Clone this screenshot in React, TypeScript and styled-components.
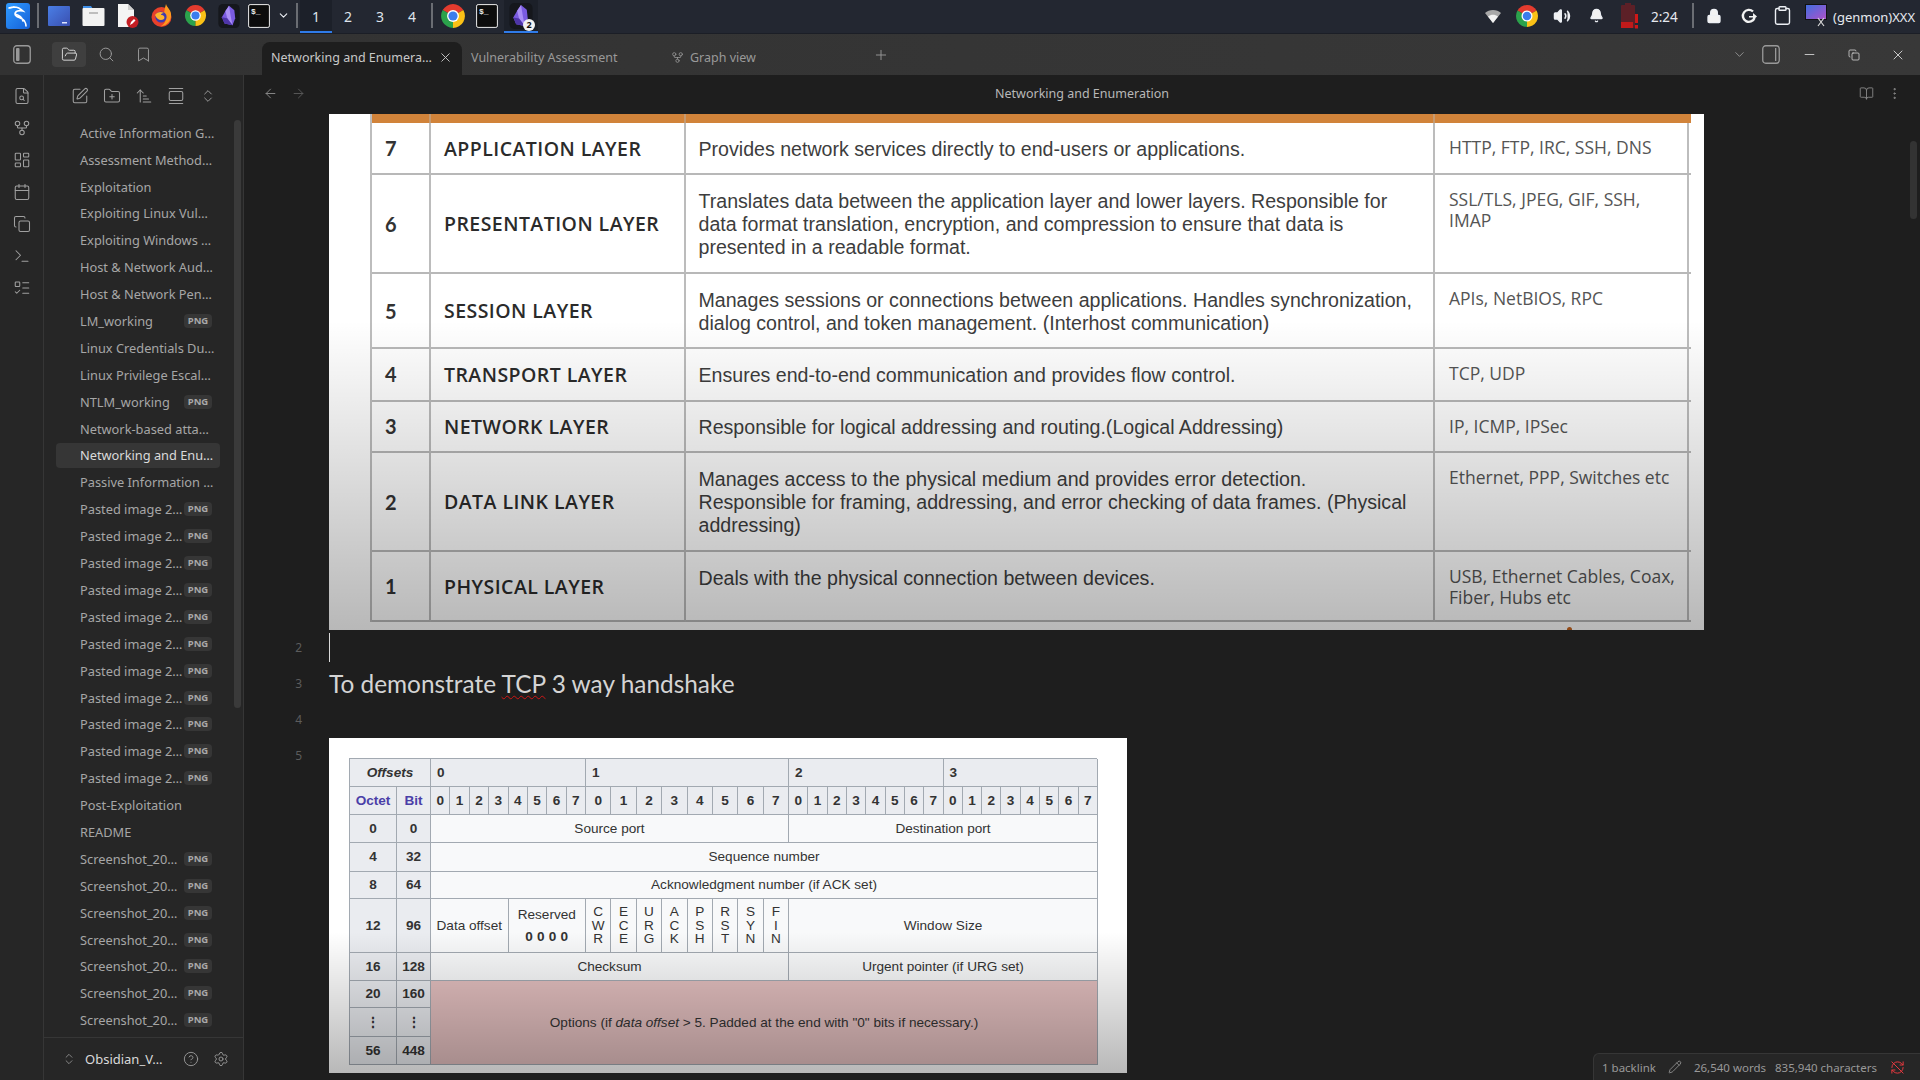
import React, { FC, ReactNode } from "react";
import styled, { createGlobalStyle } from "styled-components";
import {
  ArrowLeft,
  ArrowRight,
  ArrowUpNarrowWide,
  Bell,
  Bookmark,
  BookOpen,
  Calendar,
  ChevronDown,
  ChevronsUpDown,
  CircleHelp,
  Clipboard,
  Copy,
  EllipsisVertical,
  FileSearch,
  FolderOpen,
  FolderPlus,
  GalleryVertical,
  GitFork,
  LayoutDashboard,
  ListTodo,
  Lock,
  Minus,
  Pencil,
  Plus,
  RefreshCw,
  Search,
  Settings,
  SquarePen,
  Terminal,
  Volume2,
  X,
} from "lucide-react";

const GlobalStyle = createGlobalStyle`
  html, body {
    margin: 0;
    padding: 0;
    background: #1e1e1e;
    overflow: hidden;
  }
  * { box-sizing: border-box; }
`;

/* ---------- desktop panel ---------- */

const Page = styled.div`
  position: relative;
  display: flex;
  flex-direction: column;
  width: 1920px;
  height: 1080px;
  overflow: hidden;
  font-family: "Noto Sans", sans-serif;
`;

const Panel = styled.div`
  display: flex;
  align-items: stretch;
  justify-content: space-between;
  height: 34px;
  flex: none;
  background: #232731;
  border-bottom: 1px solid #1b1e26;
  color: #eceff4;
`;

const PanelGroup = styled.div`
  display: flex;
  align-items: stretch;
`;

const Slot = styled.div<{ $w: number; $active?: boolean; $line?: boolean }>`
  display: flex;
  align-items: center;
  justify-content: center;
  width: ${(p) => p.$w}px;
  flex: none;
  position: relative;
  background: ${(p) => (p.$active ? "#1c2029" : "transparent")};
  border-bottom: 2px solid ${(p) => (p.$line ? "#2f7be8" : "transparent")};
`;

const Workspace = styled(Slot)`
  font-size: 14px;
  padding-top: 1px;
  color: #dfe4ec;
`;

const PanelSep = styled.div`
  width: 2px;
  height: 25px;
  background: #6a6d73;
`;

const Clock = styled.div`
  width: 40px;
  display: flex;
  align-items: center;
  font-size: 13.5px;
  color: #e6e9ef;
`;

const GenmonText = styled.div`
  display: flex;
  align-items: center;
  width: 87px;
  font-size: 13px;
  white-space: nowrap;
  color: #e6e9ef;
`;

const Badge2 = styled.span`
  position: absolute;
  right: 3px;
  bottom: 0;
  width: 12px;
  height: 12px;
  border-radius: 50%;
  background: #f2f2f2;
  color: #111;
  font-size: 9px;
  font-weight: 700;
  line-height: 12px;
  text-align: center;
`;

/* ---------- obsidian title bar ---------- */

const TitleBar = styled.div`
  display: flex;
  align-items: flex-end;
  height: 41px;
  flex: none;
  background: linear-gradient(90deg, #323232, #383838);
  color: #999;
`;

const TitleTools = styled.div`
  display: flex;
  align-items: center;
  width: 262px;
  height: 41px;
  flex: none;
`;

const ToolSlot = styled.div<{ $w: number; $active?: boolean; $ml?: number; $bright?: boolean }>`
  display: flex;
  align-items: center;
  justify-content: center;
  width: ${(p) => p.$w}px;
  height: ${(p) => (p.$active ? "25px" : "100%")};
  margin-left: ${(p) => p.$ml || 0}px;
  flex: none;
  border-radius: 4px;
  background: ${(p) => (p.$active ? "#3f3f3f" : "transparent")};
  color: ${(p) => (p.$active || p.$bright ? "#d4d4d4" : "#999")};
`;

const Tab = styled.div<{ $active?: boolean }>`
  display: flex;
  align-items: center;
  gap: 6px;
  width: 200px;
  height: 33px;
  padding: 0 9px 2px;
  flex: none;
  border-radius: 8px 8px 0 0;
  font-size: 12.5px;
  background: ${(p) => (p.$active ? "#1e1e1e" : "transparent")};
  color: ${(p) => (p.$active ? "#c8c8c8" : "#999")};
`;

const TabLabel = styled.span`
  flex: 1;
  white-space: nowrap;
`;

const TitleRight = styled.div`
  display: flex;
  margin-left: auto;
  height: 41px;
`;

/* ---------- body ---------- */

const Body = styled.div`
  display: flex;
  flex: 1;
  min-height: 0;
`;

const Ribbon = styled.div`
  display: flex;
  flex-direction: column;
  width: 44px;
  flex: none;
  padding-top: 5px;
  background: #262626;
  border-right: 1px solid #363636;
  color: #a0a0a0;
`;

const RibbonSlot = styled.div`
  display: flex;
  align-items: center;
  justify-content: center;
  height: 32px;
`;

const Sidebar = styled.div`
  position: relative;
  display: flex;
  flex-direction: column;
  width: 200px;
  flex: none;
  background: #262626;
  border-right: 1px solid #363636;
`;

const SideHead = styled.div`
  display: flex;
  align-items: center;
  height: 42px;
  padding-left: 20px;
  flex: none;
  color: #a0a0a0;
`;

const SideHeadSlot = styled.div`
  display: flex;
  align-items: center;
  justify-content: center;
  width: 32px;
`;

const FileList = styled.div`
  flex: 1;
  min-height: 0;
  padding: 3.3px 0 0 12px;
  overflow: hidden;
`;

const FileRow = styled.div<{ $active?: boolean }>`
  display: flex;
  align-items: center;
  width: 164px;
  height: 25px;
  margin-bottom: 1.9px;
  padding: 0 8px 0 24px;
  border-radius: 4px;
  font-size: 12.8px;
  white-space: nowrap;
  background: ${(p) => (p.$active ? "#363636" : "transparent")};
  color: ${(p) => (p.$active ? "#dadada" : "#a6a6a6")};
`;

const FileName = styled.span`
  flex: 1;
`;

const PngTag = styled.span`
  width: 28px;
  height: 14px;
  flex: none;
  border-radius: 4px;
  background: #363636;
  color: #a8a8a8;
  font-size: 9.5px;
  font-weight: 700;
  line-height: 14px;
  text-align: center;
`;

const SideScroll = styled.div`
  position: absolute;
  left: 190px;
  top: 45px;
  width: 7px;
  height: 588px;
  border-radius: 4px;
  background: #3a3a3a;
`;

const SideFoot = styled.div`
  display: flex;
  align-items: center;
  gap: 14px;
  height: 43px;
  padding: 0 14px 0 18px;
  flex: none;
  border-top: 1px solid #363636;
  color: #999;
`;

const VaultName = styled.span`
  flex: 1;
  margin-left: -5px;
  font-size: 13px;
  color: #dadada;
`;

/* ---------- editor ---------- */

const Main = styled.div`
  position: relative;
  display: flex;
  flex-direction: column;
  flex: 1;
  min-width: 0;
  background: #1e1e1e;
`;

const EditorHead = styled.div`
  display: flex;
  align-items: center;
  height: 39px;
  padding-bottom: 2px;
  flex: none;
  color: #999;
`;

const HeadSide = styled.div`
  display: flex;
  width: 80px;
  flex: none;
  padding: 0 12px;
`;

const HeadSlot = styled.div<{ $dim?: boolean }>`
  display: flex;
  justify-content: center;
  width: 28px;
  color: ${(p) => (p.$dim ? "#5a5a5a" : "#8c8c8c")};
`;

const NoteTitle = styled.div`
  flex: 1;
  font-size: 12.5px;
  text-align: center;
  color: #b8b8b8;
`;

const Line = styled.div`
  display: grid;
  grid-template-columns: 85px 1fr;
  align-items: start;
  min-height: 36px;
`;

const LineNo = styled.div`
  padding-right: 27px;
  font-size: 12px;
  line-height: 36px;
  text-align: right;
  color: #5c5c5c;
`;

const Caret = styled.div`
  width: 1px;
  height: 29px;
  margin-top: 3px;
  background: #dadada;
`;

const Prose = styled.div`
  font-family: "Lato", sans-serif;
  font-size: 24.4px;
  line-height: 36px;
  color: #d4d4d4;
`;

const Misspelt = styled.span`
  text-decoration: underline wavy #d01515 1px;
  text-underline-offset: 2px;
`;

const Shot = styled.div<{ $w: number; $h: number; $pad: string; $fade: number }>`
  position: relative;
  width: ${(p) => p.$w}px;
  height: ${(p) => p.$h}px;
  padding: ${(p) => p.$pad};
  background: #fff;
  overflow: hidden;

  &::after {
    content: "";
    position: absolute;
    inset: 0;
    background: linear-gradient(
      180deg,
      transparent ${(p) => p.$fade}%,
      rgba(0, 0, 0, 0.28) 100%
    );
    pointer-events: none;
  }
`;

const OrangeDot = styled.span`
  position: absolute;
  left: 1238px;
  bottom: 0;
  width: 5px;
  height: 3px;
  border-radius: 3px 3px 0 0;
  background: #c9661f;
`;

/* OSI table */
const OsiGrid = styled.div`
  display: grid;
  grid-template-columns: 59px 254.5px 749.5px 256px;
  grid-template-rows: 9px 52px 99px 75px 52.5px 51.5px 99px 70px;
  border-left: 2px solid #bdbdbd;
  border-right: 2px solid #bdbdbd;
`;

const OsiHead = styled.div`
  background: #d1833a;
  border-right: 2px solid #c69a70;

  &:nth-child(4) { border-right: 0; }
`;

const OsiCell = styled.div<{ $last?: boolean }>`
  border-right: ${(p) => (p.$last ? "0" : "2px solid #bcbcbc")};
  border-bottom: 2px solid #b8b8b8;
`;

const OsiNum = styled(OsiCell)`
  display: flex;
  align-items: center;
  padding-left: 13px;
  font-family: "Lato", sans-serif;
  font-size: 20px;
  font-weight: 700;
  color: #333;
`;

const OsiName = styled(OsiCell)`
  display: flex;
  align-items: center;
  padding-left: 13px;
  font-family: "Open Sans", sans-serif;
  font-size: 19.5px;
  font-weight: 600;
  letter-spacing: 0.45px;
  white-space: nowrap;
  color: #2b2b2b;
`;

const OsiDesc = styled(OsiCell)`
  padding: 14.5px 12px 0 13px;
  font-family: "Liberation Sans", sans-serif;
  font-size: 19.6px;
  line-height: 23.4px;
  white-space: pre-line;
  color: #3d3d3d;
`;

const OsiProto = styled(OsiCell)`
  padding: 14px 6px 0 14px;
  font-family: "Open Sans", sans-serif;
  font-size: 17.5px;
  line-height: 21px;
  white-space: pre-line;
  color: #555;
`;

/* TCP header table */
const TcpGrid = styled.div`
  display: grid;
  grid-template-columns: 47px 34px repeat(8, 19.375px) repeat(8, 25.375px) repeat(16, 19.3125px);
  grid-template-rows: 28px 28.5px 28px 28.5px 27px 54px 28px 27.5px 28.5px 28px;
  border-top: 1px solid #a2a9b1;
  border-left: 1px solid #a2a9b1;
  font-family: "Liberation Sans", sans-serif;
  font-size: 13.6px;
  color: #333;
`;

const TcpCell = styled.div<{
  $span?: number;
  $rows?: number;
  $head?: boolean;
  $bold?: boolean;
  $left?: boolean;
  $blue?: boolean;
  $red?: boolean;
}>`
  display: flex;
  flex-direction: column;
  align-items: ${(p) => (p.$left ? "flex-start" : "center")};
  justify-content: center;
  grid-column: span ${(p) => p.$span || 1};
  grid-row: span ${(p) => p.$rows || 1};
  padding-left: ${(p) => (p.$left ? "6px" : "0")};
  border-right: 1px solid #a2a9b1;
  border-bottom: 1px solid #a2a9b1;
  background: ${(p) => (p.$red ? "#e3bfbf" : p.$head ? "#eaecf0" : "#f8f9fa")};
  font-weight: ${(p) => (p.$bold || p.$head ? 700 : 400)};
  color: ${(p) => (p.$blue ? "#4a3fa8" : "#333")};
  white-space: nowrap;
`;

const Flag = styled.span`
  line-height: 13.3px;
  text-align: center;
  white-space: pre-line;
`;

const ReservedBits = styled.b`
  margin-top: 7px;
  letter-spacing: 4.2px;
  margin-right: -4px;
`;

/* overlays */
const StatusBar = styled.div`
  position: absolute;
  right: 0;
  bottom: 0;
  display: flex;
  align-items: center;
  width: 327px;
  height: 27px;
  padding-left: 8px;
  border: 1px solid #363636;
  border-width: 1px 0 0 1px;
  border-radius: 6px 0 0 0;
  background: #262626;
  font-size: 11.5px;
  color: #999;
  white-space: nowrap;
`;

const StatusGap = styled.span<{ $w: number }>`
  display: inline-flex;
  margin-left: ${(p) => p.$w}px;
`;

const MainScroll = styled.div`
  position: absolute;
  right: 3px;
  top: 66px;
  width: 7px;
  height: 78px;
  border-radius: 4px;
  background: #333;
`;

/* ---------- drawn icons ---------- */

const KaliLogo: FC = () => (
  <svg width="24" height="26" viewBox="0 0 24 26">
    <defs>
      <linearGradient id="kali" x1="0" y1="0" x2="1" y2="1">
        <stop offset="0" stopColor="#2f9bff" />
        <stop offset="1" stopColor="#1560d8" />
      </linearGradient>
    </defs>
    <rect width="24" height="26" rx="3" fill="url(#kali)" />
    <path
      d="M3 5c5-2 10-1 14 3-4-1-8 0-8 3 0 4 8 3 10 8 1 2 1 3 1 4M9 11c4 1 7 3 8 7M4 5l4-1"
      fill="none"
      stroke="#fff"
      strokeWidth="1.6"
      strokeLinecap="round"
    />
  </svg>
);

const ChromeIcon: FC<{ size: number }> = ({ size }) => (
  <svg width={size} height={size} viewBox="0 0 48 48">
    <path d="M24 24 4.95 13A22 22 0 0 1 43.05 13Z" fill="#e33b2e" />
    <path d="M24 24 4.95 13A22 22 0 0 0 24 46Z" fill="#2ba24c" />
    <path d="M24 24 24 46A22 22 0 0 0 43.05 13Z" fill="#fbc116" />
    <circle cx="24" cy="24" r="11" fill="#fff" />
    <circle cx="24" cy="24" r="8.5" fill="#3b7ded" />
  </svg>
);

const FirefoxIcon: FC = () => (
  <svg width="21" height="25" viewBox="0 0 21 25">
    <circle cx="10.5" cy="14" r="10" fill="#e8412b" />
    <path d="M15 1c1 4 6 6 5 13-1 6-6 9-10 9 5-3 6-8 3-11 0-4 1-7 2-11Z" fill="#ff9a1f" />
    <circle cx="10" cy="14" r="5.6" fill="#3f3bb0" />
    <path d="M4 12c2-3 6-4 9-2-2 0-3 1-3 2 3 0 4 2 3 4-3 2-7 1-9-4Z" fill="#ffb52e" />
  </svg>
);

const ObsidianIcon: FC<{ h: number }> = ({ h }) => (
  <svg width={h} height={h} viewBox="-3 -2 24 27">
    <rect x="-3" y="-2" width="24" height="27" rx="5" fill="#15171c" />
    <polygon points="9,0 15,5 16,14 13,22 4,20 1,13 5,6" fill="#7a5be0" />
    <polygon points="9,0 5,6 7,14 13,22 11,12" fill="#a98ef5" />
    <polygon points="1,13 7,14 13,22 4,20" fill="#4e35a8" />
  </svg>
);

const TermIcon: FC = () => (
  <svg width="22" height="24" viewBox="0 0 22 24">
    <rect x="0.6" y="0.6" width="20.8" height="22.8" rx="1.5" fill="#0c0c0c" stroke="#ededed" />
    <text x="3" y="10" fill="#eee" fontSize="8" fontFamily="Liberation Mono, monospace" fontWeight="700">
      $_
    </text>
  </svg>
);

const DesktopIcon: FC = () => (
  <svg width="22" height="20" viewBox="0 0 22 20">
    <defs>
      <linearGradient id="desk" x1="0" y1="0" x2="1" y2="1">
        <stop offset="0" stopColor="#4a7fe6" />
        <stop offset="1" stopColor="#3a4fb0" />
      </linearGradient>
    </defs>
    <rect width="22" height="20" rx="1" fill="url(#desk)" />
    <rect x="14" y="16" width="5" height="1.5" fill="#dfe6ff" />
  </svg>
);

const FilesIcon: FC = () => (
  <svg width="23" height="23" viewBox="0 0 23 23">
    <path d="M1 5V2h8l2 3Z" fill="#3f8fe8" />
    <rect x="0.5" y="4" width="22" height="18" rx="1" fill="#f2f2f2" />
    <rect x="7" y="8" width="9" height="2" fill="#bdbdbd" />
  </svg>
);

const DocIcon: FC = () => (
  <svg width="22" height="26" viewBox="0 0 22 26">
    <path d="M1 1h10l6 6v17H1Z" fill="#f4f4f4" />
    <path d="M11 1v6h6Z" fill="#cfcfcf" />
    <circle cx="15.5" cy="19" r="6" fill="#c41e24" />
    <path d="m13 22 1-3 3-3 1.5 1.5-3 3Z" fill="#fff" />
  </svg>
);

const WifiIcon: FC = () => (
  <svg width="16" height="16" viewBox="0 0 16 16">
    <path d="M0 5C4 1 12 1 16 5L8 15Z" fill="#a8a8a8" />
    <path d="M3 8.5C6 6 10 6 13 8.5L8 15Z" fill="#f2f2f2" />
  </svg>
);

const BatteryIcon: FC = () => (
  <svg width="18" height="26" viewBox="0 0 18 26">
    <rect x="4" y="0" width="6" height="3" fill="#5c2027" />
    <rect x="0" y="2" width="14" height="23" rx="1" fill="#5c2027" />
    <rect x="0" y="19" width="12" height="6" fill="#c01a1a" />
    <rect x="14" y="11" width="3" height="9" fill="#d01818" />
    <rect x="14" y="22" width="3" height="3.5" fill="#d01818" />
  </svg>
);

const GArrowIcon: FC = () => (
  <svg width="16" height="16" viewBox="0 0 16 16">
    <path d="M12 3.5A6 6 0 1 0 13.5 10" fill="none" stroke="#f2f2f2" strokeWidth="2.4" />
    <path d="M8 8h4V5l4 3.5-4 3.5V9.5H8Z" fill="#f2f2f2" />
  </svg>
);

const ScreenIcon: FC = () => (
  <svg width="22" height="23" viewBox="0 0 22 23">
    <defs>
      <linearGradient id="scr" x1="0" y1="0" x2="1" y2="1">
        <stop offset="0" stopColor="#3f6fe0" />
        <stop offset="1" stopColor="#b050c8" />
      </linearGradient>
    </defs>
    <rect x="0.5" y="0.5" width="21" height="15" fill="url(#scr)" stroke="#111" />
    <path d="m13 14 6 8M19 14l-6 8" stroke="#d8d8d8" strokeWidth="1.2" />
  </svg>
);

const PanelToggle: FC<{ side: "left" | "right" }> = ({ side }) => (
  <svg width="18" height="19" viewBox="0 0 18 19" fill="none">
    <rect x="0.75" y="0.75" width="16.5" height="17.5" rx="3" stroke="currentColor" strokeWidth="1.3" />
    {side === "left" ? (
      <rect x="3" y="3" width="3.5" height="13" rx="1" fill="currentColor" />
    ) : (
      <rect x="13" y="3" width="1.3" height="13" fill="currentColor" />
    )}
  </svg>
);

const Chevrons: FC = () => <ChevronsUpDown size={16} strokeWidth={1.4} />;

/* ---------- data ---------- */

interface SideFile {
  name: string;
  png?: boolean;
  active?: boolean;
}

const repeat = (name: string, count: number): SideFile[] =>
  Array.from({ length: count }, () => ({ name, png: true }));

const files: SideFile[] = [
  { name: "Active Information G…" },
  { name: "Assessment Method…" },
  { name: "Exploitation" },
  { name: "Exploiting Linux Vul…" },
  { name: "Exploiting Windows …" },
  { name: "Host & Network Aud…" },
  { name: "Host & Network Pen…" },
  { name: "LM_working", png: true },
  { name: "Linux Credentials Du…" },
  { name: "Linux Privilege Escal…" },
  { name: "NTLM_working", png: true },
  { name: "Network-based atta…" },
  { name: "Networking and Enu…", active: true },
  { name: "Passive Information …" },
  ...repeat("Pasted image 2…", 11),
  { name: "Post-Exploitation" },
  { name: "README" },
  ...repeat("Screenshot_20…", 7),
];

const ribbonIcons: ReactNode[] = [
  <FileSearch size={18} strokeWidth={1.4} />,
  <GitFork size={18} strokeWidth={1.4} />,
  <LayoutDashboard size={18} strokeWidth={1.4} />,
  <Calendar size={18} strokeWidth={1.4} />,
  <Copy size={18} strokeWidth={1.4} />,
  <Terminal size={18} strokeWidth={1.4} />,
  <ListTodo size={18} strokeWidth={1.4} />,
];

const layers = [
  {
    n: "7",
    name: "APPLICATION LAYER",
    desc: "Provides network services directly to end-users or applications.",
    proto: "HTTP, FTP, IRC, SSH, DNS",
  },
  {
    n: "6",
    name: "PRESENTATION LAYER",
    desc: "Translates data between the application layer and lower layers. Responsible for\ndata format translation, encryption, and compression to ensure that data is\npresented in a readable format.",
    proto: "SSL/TLS, JPEG, GIF, SSH,\nIMAP",
  },
  {
    n: "5",
    name: "SESSION LAYER",
    desc: "Manages sessions or connections between applications. Handles synchronization,\ndialog control, and token management. (Interhost communication)",
    proto: "APIs, NetBIOS, RPC",
  },
  {
    n: "4",
    name: "TRANSPORT LAYER",
    desc: "Ensures end-to-end communication and provides flow control.",
    proto: "TCP, UDP",
  },
  {
    n: "3",
    name: "NETWORK LAYER",
    desc: "Responsible for logical addressing and routing.(Logical Addressing)",
    proto: "IP, ICMP, IPSec",
  },
  {
    n: "2",
    name: "DATA LINK LAYER",
    desc: "Manages access to the physical medium and provides error detection.\nResponsible for framing, addressing, and error checking of data frames. (Physical\naddressing)",
    proto: "Ethernet, PPP, Switches etc",
  },
  {
    n: "1",
    name: "PHYSICAL LAYER",
    desc: "Deals with the physical connection between devices.",
    proto: "USB, Ethernet Cables, Coax,\nFiber, Hubs etc",
  },
];

const bitLabels = Array.from({ length: 32 }, (_, i) => String(i % 8));
const flags = ["C\nW\nR", "E\nC\nE", "U\nR\nG", "A\nC\nK", "P\nS\nH", "R\nS\nT", "S\nY\nN", "F\nI\nN"];

const OsiTable: FC = () => (
  <OsiGrid>
    <OsiHead />
    <OsiHead />
    <OsiHead />
    <OsiHead />
    {layers.map((l) => (
      <React.Fragment key={l.n}>
        <OsiNum>{l.n}</OsiNum>
        <OsiName>{l.name}</OsiName>
        <OsiDesc>{l.desc}</OsiDesc>
        <OsiProto $last>{l.proto}</OsiProto>
      </React.Fragment>
    ))}
  </OsiGrid>
);

const TcpTable: FC = () => (
  <TcpGrid>
    <TcpCell $span={2} $head>
      <i>Offsets</i>
    </TcpCell>
    <TcpCell $span={8} $head $left>0</TcpCell>
    <TcpCell $span={8} $head $left>1</TcpCell>
    <TcpCell $span={8} $head $left>2</TcpCell>
    <TcpCell $span={8} $head $left>3</TcpCell>

    <TcpCell $head $blue>Octet</TcpCell>
    <TcpCell $head $blue>Bit</TcpCell>
    {bitLabels.map((b, i) => (
      <TcpCell key={i} $head>{b}</TcpCell>
    ))}

    <TcpCell $head>0</TcpCell>
    <TcpCell $head>0</TcpCell>
    <TcpCell $span={16}>Source port</TcpCell>
    <TcpCell $span={16}>Destination port</TcpCell>

    <TcpCell $head>4</TcpCell>
    <TcpCell $head>32</TcpCell>
    <TcpCell $span={32}>Sequence number</TcpCell>

    <TcpCell $head>8</TcpCell>
    <TcpCell $head>64</TcpCell>
    <TcpCell $span={32}>Acknowledgment number (if ACK set)</TcpCell>

    <TcpCell $head>12</TcpCell>
    <TcpCell $head>96</TcpCell>
    <TcpCell $span={4}>Data offset</TcpCell>
    <TcpCell $span={4}>
      Reserved
      <ReservedBits>0000</ReservedBits>
    </TcpCell>
    {flags.map((f) => (
      <TcpCell key={f}>
        <Flag>{f}</Flag>
      </TcpCell>
    ))}
    <TcpCell $span={16}>Window Size</TcpCell>

    <TcpCell $head>16</TcpCell>
    <TcpCell $head>128</TcpCell>
    <TcpCell $span={16}>Checksum</TcpCell>
    <TcpCell $span={16}>Urgent pointer (if URG set)</TcpCell>

    <TcpCell $head>20</TcpCell>
    <TcpCell $head>160</TcpCell>
    <TcpCell $span={32} $rows={3} $red>
      <span>
        Options (if <i>data offset</i> &gt; 5. Padded at the end with "0" bits if necessary.)
      </span>
    </TcpCell>
    <TcpCell $head>⋮</TcpCell>
    <TcpCell $head>⋮</TcpCell>
    <TcpCell $head>56</TcpCell>
    <TcpCell $head>448</TcpCell>
  </TcpGrid>
);

export default function App() {
  return (
    <Page>
      <GlobalStyle />

      <Panel>
        <PanelGroup>
          <Slot $w={35}><KaliLogo /></Slot>
          <Slot $w={6}><PanelSep /></Slot>
          <Slot $w={35}><DesktopIcon /></Slot>
          <Slot $w={34}><FilesIcon /></Slot>
          <Slot $w={35}><DocIcon /></Slot>
          <Slot $w={33}><FirefoxIcon /></Slot>
          <Slot $w={34}><ChromeIcon size={23} /></Slot>
          <Slot $w={33}><ObsidianIcon h={24} /></Slot>
          <Slot $w={28}><TermIcon /></Slot>
          <Slot $w={21}><ChevronDown size={13} strokeWidth={2} /></Slot>
          <Slot $w={6}><PanelSep /></Slot>
          <Workspace $w={32} $active $line>1</Workspace>
          <Workspace $w={32}>2</Workspace>
          <Workspace $w={32}>3</Workspace>
          <Workspace $w={32}>4</Workspace>
          <Slot $w={8}><PanelSep /></Slot>
          <Slot $w={34}><ChromeIcon size={26} /></Slot>
          <Slot $w={34}><TermIcon /></Slot>
          <Slot $w={34} $active $line>
            <ObsidianIcon h={26} />
            <Badge2>2</Badge2>
          </Slot>
        </PanelGroup>
        <PanelGroup>
          <Slot $w={34}><WifiIcon /></Slot>
          <Slot $w={34}><ChromeIcon size={24} /></Slot>
          <Slot $w={35}><Volume2 size={18} fill="#f2f2f2" strokeWidth={2} /></Slot>
          <Slot $w={34}><Bell size={15} fill="#f2f2f2" /></Slot>
          <Slot $w={34}><BatteryIcon /></Slot>
          <Slot $w={4} />
          <Clock>2:24</Clock>
          <Slot $w={4}><PanelSep /></Slot>
          <Slot $w={38}><Lock size={16} fill="#f2f2f2" strokeWidth={2} /></Slot>
          <Slot $w={32}><GArrowIcon /></Slot>
          <Slot $w={34}><Clipboard size={21} strokeWidth={1.6} /></Slot>
          <Slot $w={34}><ScreenIcon /></Slot>
          <GenmonText>(genmon)XXX</GenmonText>
        </PanelGroup>
      </Panel>

      <TitleBar>
        <TitleTools>
          <ToolSlot $w={44}><PanelToggle side="left" /></ToolSlot>
          <ToolSlot $w={34} $ml={8} $active><FolderOpen size={17} strokeWidth={1.4} /></ToolSlot>
          <ToolSlot $w={40}><Search size={17} strokeWidth={1.4} /></ToolSlot>
          <ToolSlot $w={34}><Bookmark size={17} strokeWidth={1.4} /></ToolSlot>
        </TitleTools>
        <Tab $active>
          <TabLabel>Networking and Enumera…</TabLabel>
          <X size={15} strokeWidth={1.5} />
        </Tab>
        <Tab>
          <TabLabel>Vulnerability Assessment</TabLabel>
        </Tab>
        <Tab>
          <GitFork size={13} strokeWidth={1.4} />
          <TabLabel>Graph view</TabLabel>
        </Tab>
        <ToolSlot $w={38}><Plus size={16} strokeWidth={1.4} /></ToolSlot>
        <TitleRight>
          <ToolSlot $w={32}><ChevronDown size={15} strokeWidth={1.4} /></ToolSlot>
          <ToolSlot $w={32}><PanelToggle side="right" /></ToolSlot>
          <ToolSlot $w={45} $bright><Minus size={15} strokeWidth={1.4} /></ToolSlot>
          <ToolSlot $w={44} $bright><Copy size={12} strokeWidth={1.6} /></ToolSlot>
          <ToolSlot $w={44} $bright><X size={16} strokeWidth={1.4} /></ToolSlot>
        </TitleRight>
      </TitleBar>

      <Body>
        <Ribbon>
          {ribbonIcons.map((icon, i) => (
            <RibbonSlot key={i}>{icon}</RibbonSlot>
          ))}
        </Ribbon>

        <Sidebar>
          <SideHead>
            <SideHeadSlot><SquarePen size={18} strokeWidth={1.4} /></SideHeadSlot>
            <SideHeadSlot><FolderPlus size={18} strokeWidth={1.4} /></SideHeadSlot>
            <SideHeadSlot><ArrowUpNarrowWide size={18} strokeWidth={1.4} /></SideHeadSlot>
            <SideHeadSlot><GalleryVertical size={18} strokeWidth={1.4} /></SideHeadSlot>
            <SideHeadSlot><Chevrons /></SideHeadSlot>
          </SideHead>
          <FileList>
            {files.map((f, i) => (
              <FileRow key={i} $active={f.active}>
                <FileName>{f.name}</FileName>
                {f.png && <PngTag>PNG</PngTag>}
              </FileRow>
            ))}
          </FileList>
          <SideScroll />
          <SideFoot>
            <ChevronsUpDown size={14} strokeWidth={1.4} />
            <VaultName>Obsidian_V…</VaultName>
            <CircleHelp size={16} strokeWidth={1.4} />
            <Settings size={16} strokeWidth={1.4} />
          </SideFoot>
        </Sidebar>

        <Main>
          <EditorHead>
            <HeadSide>
              <HeadSlot><ArrowLeft size={15} strokeWidth={1.5} /></HeadSlot>
              <HeadSlot $dim><ArrowRight size={15} strokeWidth={1.5} /></HeadSlot>
            </HeadSide>
            <NoteTitle>Networking and Enumeration</NoteTitle>
            <HeadSide>
              <HeadSlot><BookOpen size={15} strokeWidth={1.4} /></HeadSlot>
              <HeadSlot><EllipsisVertical size={15} strokeWidth={1.6} /></HeadSlot>
            </HeadSide>
          </EditorHead>

          <Line>
            <LineNo />
            <Shot $w={1375} $h={516} $pad="0 15px 8px 41px" $fade={40}>
              <OsiTable />
              <OrangeDot />
            </Shot>
          </Line>
          <Line>
            <LineNo>2</LineNo>
            <Caret />
          </Line>
          <Line>
            <LineNo>3</LineNo>
            <Prose>
              To demonstrate <Misspelt>TCP</Misspelt> 3 way handshake
            </Prose>
          </Line>
          <Line>
            <LineNo>4</LineNo>
            <div />
          </Line>
          <Line>
            <LineNo>5</LineNo>
            <Shot $w={798} $h={335} $pad="19.7px 30px 8px 20px" $fade={58}>
              <TcpTable />
            </Shot>
          </Line>

          <MainScroll />
          <StatusBar>
            1 backlink
            <StatusGap $w={12}>
              <Pencil size={14} strokeWidth={1.4} />
            </StatusGap>
            <StatusGap $w={12}>26,540 words</StatusGap>
            <StatusGap $w={9}>835,940 characters</StatusGap>
            <StatusGap $w={13}>
              <RefreshCw size={15} color="#e5383f" strokeWidth={1.6}>
                <line x1="3" y1="3" x2="21" y2="21" />
              </RefreshCw>
            </StatusGap>
          </StatusBar>
        </Main>
      </Body>
    </Page>
  );
}
